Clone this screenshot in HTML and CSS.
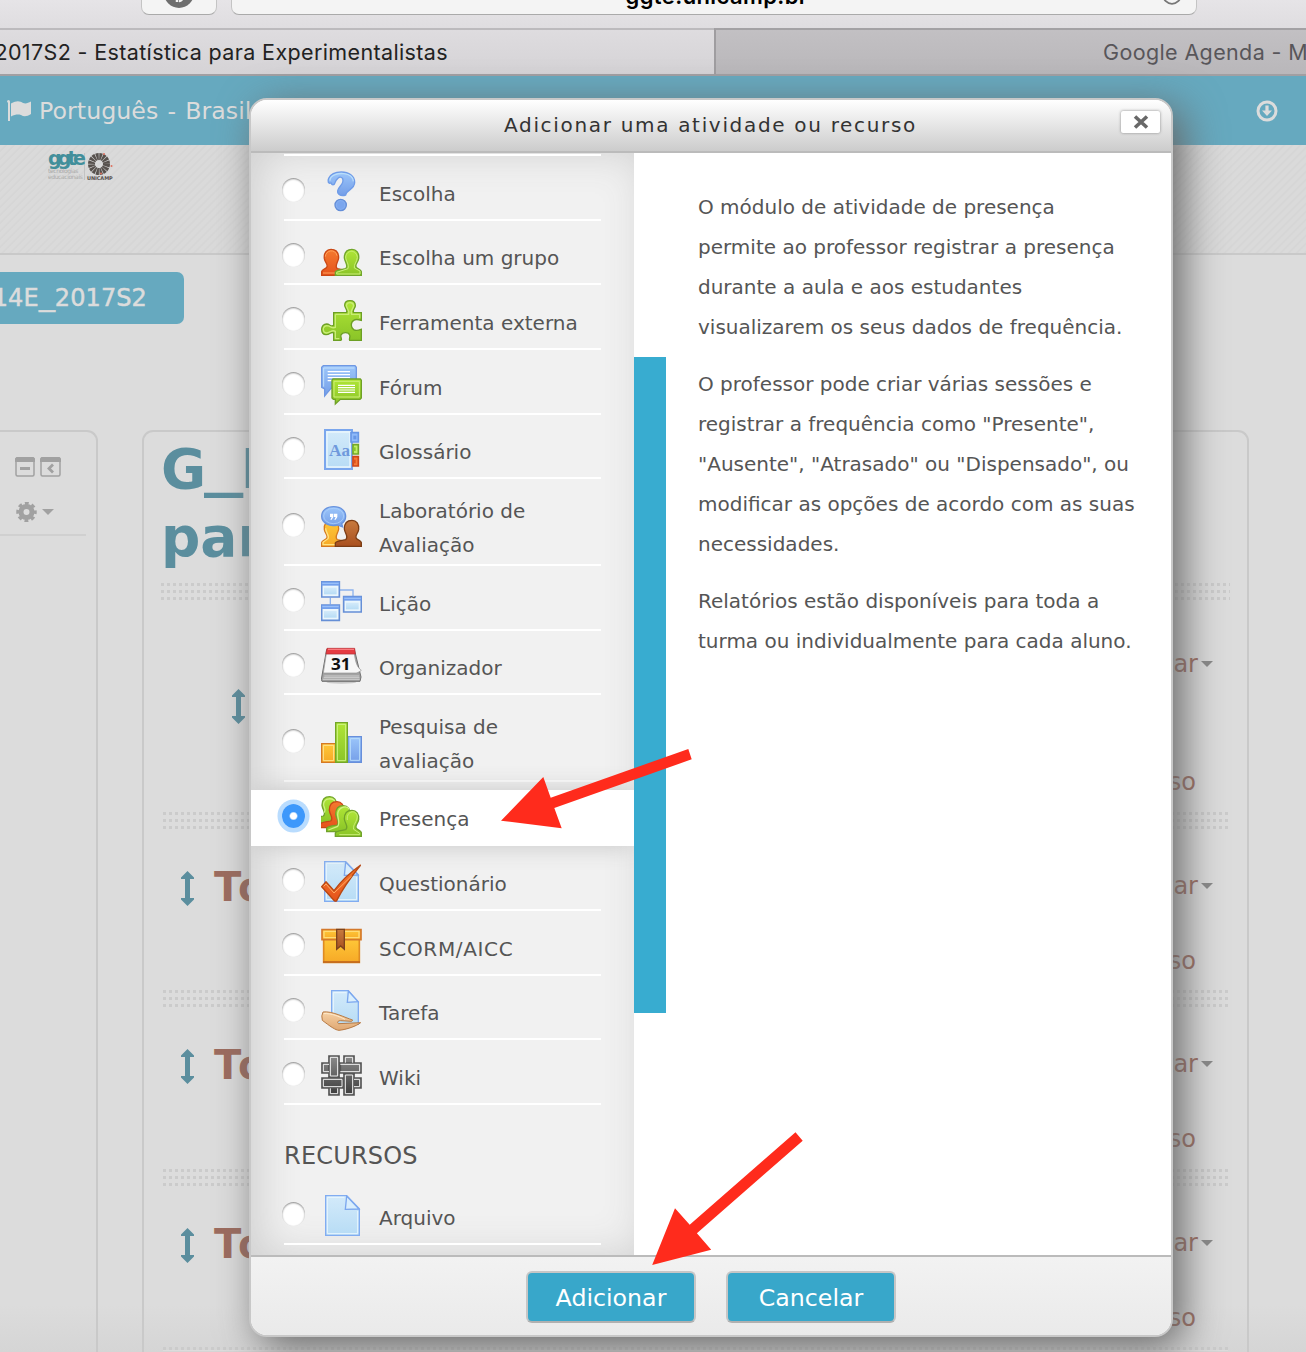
FILE: index.html
```html
<!DOCTYPE html>
<html lang="pt-BR">
<head>
<meta charset="utf-8">
<title>Adicionar uma atividade ou recurso</title>
<link rel="stylesheet" href="styles.css">
</head>
<body>
<svg class="defs" width="0" height="0">
  <defs>
    <linearGradient id="blue" x2="0" y2="1"><stop offset="0" stop-color="#9cc6fa"/><stop offset="1" stop-color="#749ee8"/></linearGradient>
    <linearGradient id="sky" x2="0" y2="1"><stop offset="0" stop-color="#d3eafa"/><stop offset="1" stop-color="#b7dcf5"/></linearGradient>
    <linearGradient id="green" x2="0" y2="1"><stop offset="0" stop-color="#b0e636"/><stop offset="1" stop-color="#8ac428"/></linearGradient>
    <linearGradient id="orange" x2="0" y2="1"><stop offset="0" stop-color="#f47a30"/><stop offset="1" stop-color="#e6531b"/></linearGradient>
    <linearGradient id="gold" x2="0" y2="1"><stop offset="0" stop-color="#ffc838"/><stop offset="1" stop-color="#f6a927"/></linearGradient>
    <linearGradient id="brown" x2="0" y2="1"><stop offset="0" stop-color="#c87a3e"/><stop offset="1" stop-color="#a9501f"/></linearGradient>
    <linearGradient id="dark" x2="0" y2="1"><stop offset="0" stop-color="#8b8b8b"/><stop offset="1" stop-color="#3c3c3c"/></linearGradient>
    <linearGradient id="skin" x2="0" y2="1"><stop offset="0" stop-color="#f6d1a5"/><stop offset="1" stop-color="#dfa772"/></linearGradient>
    <path id="person" d="M30 2C17 2 8 13 10 30C12 41 21 47 18 54C15 62 3 61 2 69V80H80V70C76 61 57 63 49 60C39 53 51 42 53 28C53 11 44 2 30 2Z"/>
    <g id="mover"><path d="M6.500 0L13 6.500V8H9V27H13V28.500L6.500 35L0 28.500V27H4V8H0V6.500Z" fill="#5b8e9e"/></g>
  </defs>
</svg>

<header class="chrome">
  <div class="tool-button"><svg width="30" height="24" viewBox="0 0 30 24"><circle cx="15" cy="9" r="15" fill="#6e6e6e"/><path d="M13 18V12a3 3 0 1 1 2 5M17 8l4 1" fill="none" stroke="#f3f3f3" stroke-width="2.500"/></svg></div>
  <div class="address"><span>ggte.unicamp.br</span><svg class="reload" width="20" height="20" viewBox="0 0 20 20"><circle cx="10" cy="10" r="8.800" fill="none" stroke="#777" stroke-width="1.800"/></svg></div>
</header>
<nav class="tabs">
  <div class="tab active"><span>2017S2 - Estatística para Experimentalistas</span></div>
  <div class="tab"><span>Google Agenda - M</span></div>
</nav>
<div class="navbar">
  <svg width="24" height="21" viewBox="0 0 24 21"><path d="M0 1.500a1.500 1.500 0 0 1 3 0V21H1V3Z M4 3.500C10 0 13 1 16 3c3 1 5 0 8-1.500V14c-4 2.500-7 3-10 1c-3-1-6-.500-10 1.500Z" fill="#dcdcdc"/></svg>
  <span class="language">Português - Brasil</span>
  <svg class="down" width="22" height="22" viewBox="0 0 22 22"><circle cx="11" cy="11" r="9" fill="none" stroke="#dcdcdc" stroke-width="3"/><path d="M9.400 5.500h3.200v5h3.400L11 16l-5-5.500h3.400Z" fill="#dcdcdc"/></svg>
</div>
<div class="banner">
  <div class="logo">
    <div class="ggte"><b>ggte</b><small>tecnologias</small><small>educacionais</small></div>
    <div class="unicamp"><svg width="26" height="22" viewBox="0 0 26 22"><circle cx="12" cy="11" r="7.500" fill="none" stroke="#57514d" stroke-width="7" stroke-dasharray="2.400 .550"/><circle cx="17" cy="1" r="1" fill="#df715f"/><circle cx="24.500" cy="13" r="1" fill="#df715f"/><circle cx="14" cy="20.500" r="1" fill="#df715f"/></svg><b>UNICAMP</b></div>
  </div>
</div>
<div class="crumbs"><span class="crumb">14E<span class="wide">_</span>2017S2</span></div>

<div class="page">
  <aside class="block">
    <div class="block-icons">
      <svg width="20" height="20" viewBox="0 0 20 20"><rect x="1" y="1" width="18" height="18" rx="1.500" fill="none" stroke="#a1a1a1" stroke-width="1.500"/><path d="M0 1.500L1.500 0H18.500L20 1.500V5H0ZM5 10H15V13H5Z" fill="#a1a1a1"/></svg>
      <svg width="21" height="20" viewBox="0 0 21 20"><rect x="1" y="1" width="19" height="18" rx="1.500" fill="none" stroke="#a1a1a1" stroke-width="1.500"/><path d="M0 1.500L1.500 0H19.500L21 1.500V5H0Z" fill="#a1a1a1"/><path d="M13 7.500L9 11.500L13 15.500" fill="none" stroke="#a1a1a1" stroke-width="2.800"/></svg>
    </div>
    <div class="block-menu">
      <svg width="21" height="20" viewBox="-10.500 -10 21 20"><circle r="5.500" fill="none" stroke="#a1a1a1" stroke-width="5"/><circle r="8.500" fill="none" stroke="#a1a1a1" stroke-width="3.500" stroke-dasharray="3.700 2.976" stroke-dashoffset="1.850"/></svg>
      <i class="caret light"></i>
    </div>
  </aside>
  <main class="course">
    <h1>G<span class="wide">_</span>E<br>para</h1>
    <div class="dots first"></div>
    <section class="general"><svg class="mv" width="13" height="35"><use href="#mover"/></svg><span class="edit">Editar<i class="caret"></i></span><span class="add">recurso</span></section>
    <div class="dots"></div>
    <section class="topic"><svg class="mv" width="13" height="35"><use href="#mover"/></svg><h2>Topico</h2><span class="edit">Editar<i class="caret"></i></span><span class="add">recurso</span></section>
    <div class="dots"></div>
    <section class="topic"><svg class="mv" width="13" height="35"><use href="#mover"/></svg><h2>Topico</h2><span class="edit">Editar<i class="caret"></i></span><span class="add">recurso</span></section>
    <div class="dots"></div>
    <section class="topic"><svg class="mv" width="13" height="35"><use href="#mover"/></svg><h2>Topico</h2><span class="edit">Editar<i class="caret"></i></span><span class="add">recurso</span></section>
    <div class="dots last"></div>
  </main>
</div>

<div class="dialog">
  <div class="dialog-head"><span class="title">Adicionar uma atividade ou recurso</span>
    <span class="close"><svg width="16" height="14" viewBox="0 0 16 14"><path d="M2 1.500L14 12.500M14 1.500L2 12.500" stroke="#686868" stroke-width="3.600"/></svg></span></div>
  <div class="dialog-body">
    <div class="list">
      <div class="start"></div>
      <label class="row"><i class="radio"></i><svg class="icon" viewBox="0 0 123 123"><path d="M30 36C14 43 17 3 61 3C84 3 101 15 101 34C101 57 76 55 74 72C58 77 45 68 52 54C58 43 70 37 65 23C56 10 44 28 42 35C39 44 33 43 30 36Z" fill="url(#blue)" stroke="#6f9ce8" stroke-width="4"/><path d="M27 29C26 11 55 6 69 8C85 10 96 19 97 31" fill="none" stroke="#b9defa" stroke-width="4"/><circle cx="59" cy="102" r="17" fill="#84aef0" stroke="#648ed8" stroke-width="4"/><circle cx="59" cy="102" r="11" fill="#7ba6ee"/></svg><span>Escolha</span></label>
      <label class="row short"><i class="radio"></i><svg class="icon" viewBox="0 0 123 123"><use href="#person" transform="translate(0 41)" fill="url(#orange)" stroke="#c94714" stroke-width="4"/><path d="M13 65C14 45 43 40 48 62M6 114H74" fill="none" stroke="#ffa05a" stroke-width="3"/><g transform="translate(123 41) scale(-1 1)"><use href="#person" fill="url(#green)" stroke="#71a52c" stroke-width="4"/><path d="M14 26C16 4 45 0 49 25C48 39 38 46 42 60L76 71V76H6V67L23 58C25 45 15 42 14 26" fill="none" stroke="#c9ee79" stroke-width="3"/></g></svg><span>Escolha um grupo</span></label>
      <label class="row"><i class="radio"></i><svg class="icon" viewBox="0 0 123 123"><path d="M38 38H76C83 30 71 25 71 16C71 6 78 2 87 2C97 2 103 8 103 17C103 25 92 30 98 38H121V61C111 58 105 56 98 61C88 67 89 83 98 89C106 94 113 91 121 88V121H86C83 117 89 111 86 105C83 96 65 95 60 105C57 112 65 117 60 121H38V99C30 93 28 104 15 104C6 104 2 96 2 88C2 79 8 72 17 72C27 72 30 83 38 76Z" fill="url(#green)" stroke="#6c9f24" stroke-width="4"/><path d="M43 43H83C87 31 76 25 76 16C78 5 97 5 98 17C97 26 86 33 92 43H116V54M43 43V82C33 87 28 77 17 77C3 80 4 98 16 99C29 97 33 88 43 94V116H55" fill="none" stroke="#c9ed75" stroke-width="4"/></svg><span>Ferramenta externa</span></label>
      <label class="row"><i class="radio"></i><svg class="icon" viewBox="0 0 123 123"><path d="M7 2H102L106 7V70H30L11 93V72L2 67V7Z" fill="url(#blue)" stroke="#6f98e3" stroke-width="4"/><path d="M8 65V9H100" fill="none" stroke="#c1e0fc" stroke-width="3"/><path d="M20 20H87M20 29H87M20 38H87M20 47H87" stroke="#fff" stroke-width="4"/><path d="M36 42H118L121 46V99L117 103H58L43 117V103H37L33 99V46Z" fill="url(#green)" stroke="#6fa126" stroke-width="4"/><path d="M39 49H115V96H39Z" fill="none" stroke="#ceef79" stroke-width="3"/><path d="M51 61H102M51 68H102M51 75H102M51 82H102" stroke="#fff" stroke-width="3.500"/></svg><span>Fórum</span></label>
      <label class="row short"><i class="radio"></i><svg class="icon" viewBox="0 0 123 123"><path d="M12 3H93V120H12Z" fill="url(#sky)" stroke="#7aa6ed" stroke-width="6"/><path d="M18 9H87V114H18Z" fill="none" stroke="#eaf6fd" stroke-width="4"/><text x="24" y="81" font-family="Liberation Serif, serif" font-weight="bold" font-size="50" textLength="63" lengthAdjust="spacingAndGlyphs" fill="#6f99dc">Aa</text><path d="M90 11H112V39H90Z" fill="#8fbafa" stroke="#6897e5" stroke-width="5"/><path d="M97 20H106V31H97Z" fill="#6897e5"/><path d="M96 47H112V75H96Z" fill="#c0ef65" stroke="#73a728" stroke-width="5"/><path d="M97 55H104V66H97Z" fill="#8ac42c"/><path d="M96 83H112V111H96Z" fill="#f77937" stroke="#ce4518" stroke-width="5"/><path d="M97 92H104V103H97Z" fill="#dc501e"/></svg><span>Glossário</span></label>
      <label class="row tall"><i class="radio"></i><svg class="icon" viewBox="0 0 123 123"><use href="#person" transform="translate(0 41)" fill="url(#gold)" stroke="#d4791f" stroke-width="4"/><path d="M14 67C14 80 26 88 21 98L6 109V116H55" fill="none" stroke="#ffe282" stroke-width="4"/><use href="#person" transform="translate(123 41) scale(-1 1)" fill="url(#brown)" stroke="#7b3c14" stroke-width="4"/><path d="M38 2C62 2 74 16 74 31C74 42 69 48 62 53L65 63L49 57C25 64 2 50 2 31C2 13 17 2 38 2Z" fill="url(#blue)" stroke="#6792de" stroke-width="4"/><ellipse cx="38" cy="30" rx="30" ry="23" fill="none" stroke="#a9cffb" stroke-width="2.500"/><path d="M27 23H37V33L32 41H28L32 33H27ZM39 23H49V33L44 41H40L44 33H39Z" fill="#fff"/></svg><span>Laboratório de<br>Avaliação</span></label>
      <label class="row"><i class="radio"></i><svg class="icon" viewBox="0 0 123 123"><path d="M56 27H96V46M28 50V70" fill="none" stroke="#8db3ed" stroke-width="4"/><g id="win"><path d="M2 2H55V48H2Z" fill="#eaf6fd" stroke="#668fd6" stroke-width="5"/><path d="M2 2H55V14H2Z" fill="#73a0ed"/><path d="M4 7H53" stroke="#a2c7fb" stroke-width="3"/><path d="M9 20H47V40H9Z" fill="url(#sky)"/></g><use href="#win" y="70"/><use href="#win" x="66" y="45"/></svg><span>Lição</span></label>
      <label class="row short"><i class="radio"></i><svg class="icon" viewBox="0 0 123 123"><g transform="translate(0 -4)"><ellipse cx="61" cy="115" rx="45" ry="5" fill="#c8c8c8"/><path d="M17 17H100L120 100L117 113H3L1 107Z" fill="#a3a3a3" stroke="#707070" stroke-width="3"/><path d="M10 97H114M8 102H115M6 107H116" stroke="#e5e5e5" stroke-width="2"/><path d="M16 30H100C103 55 109 72 121 80C112 86 108 89 102 88H7Z" fill="#f7f7f7" stroke="#969696" stroke-width="2"/><path d="M18 14H101L103 31H15Z" fill="#e53c42" stroke="#b72d33" stroke-width="2"/><path d="M21 17H99" stroke="#ff8b8e" stroke-width="3"/><text x="30" y="79" font-family="Noto Sans, sans-serif" font-weight="bold" font-size="46" textLength="59" lengthAdjust="spacingAndGlyphs" fill="#111">31</text></g></svg><span>Organizador</span></label>
      <label class="row tall"><i class="radio"></i><svg class="icon" viewBox="0 0 123 123"><path d="M2 65H44V121H2Z" fill="url(#gold)" stroke="#d57924" stroke-width="4"/><path d="M7 70H38V116H7Z" fill="none" stroke="#ffe495" stroke-width="3"/><path d="M81 44H121V121H81Z" fill="url(#blue)" stroke="#678fdb" stroke-width="4"/><path d="M88 50H116V115H88Z" fill="none" stroke="#bbdefb" stroke-width="3"/><path d="M44 2H79V121H44Z" fill="url(#green)" stroke="#73a628" stroke-width="4"/><path d="M49 7H74V116H49Z" fill="none" stroke="#d0f487" stroke-width="3"/></svg><span>Pesquisa de<br>avaliação</span></label>
      <label class="row selected"><i class="radio checked"></i><svg class="icon" viewBox="0 0 123 123"><g stroke-width="4"><use href="#person" transform="translate(56 0) scale(-1 1)" fill="url(#green)" stroke="#70a22b"/><path d="M10 50C18 38 5 34 8 22C12 4 38 5 42 18" fill="none" stroke="#d0f184"/><use href="#person" transform="translate(78 15) scale(-1 1)" fill="url(#orange)" stroke="#c74717"/><use href="#person" transform="translate(97 27) scale(-1 1)" fill="url(#green)" stroke="#70a22b"/><path d="M22 102L50 91C60 80 46 62 51 49C56 32 78 27 85 40" fill="none" stroke="#d0f184"/><use href="#person" transform="translate(123 41) scale(-1 1)" fill="url(#green)" stroke="#70a22b"/><path d="M79 72C75 46 104 38 109 60C109 77 94 87 98 100L116 112V116H55" fill="none" stroke="#c8ee77" stroke-width="3"/></g></svg><span>Presença</span></label>
      <label class="row after"><i class="radio"></i><svg class="icon" viewBox="0 0 123 123"><g id="doc"><path d="M11 2H74L112 41V121H11Z" fill="url(#sky)" stroke="#81acf1" stroke-width="4"/><path d="M16 7H67M16 7V116H107V48" fill="none" stroke="#e9f6fe" stroke-width="3"/><path d="M74 3L70 43L111 42Z" fill="#d9eefd" stroke="#7ba7ee" stroke-width="4"/></g><path d="M2 77L15 62L39 89C59 62 88 34 119 12C90 48 67 78 47 119Q43 123 38 117Z" fill="url(#orange)" stroke="#b74712" stroke-width="4"/><path d="M8 76L15 69L39 96L92 45" fill="none" stroke="#ffac64" stroke-width="3"/></svg><span>Questionário</span></label>
      <label class="row"><i class="radio"></i><svg class="icon" viewBox="0 0 123 123"><g transform="translate(0 -7)"><path d="M8 45H115V116H8Z" fill="url(#gold)" stroke="#df8b23" stroke-width="5"/><path d="M6 115H117" stroke="#bf641d" stroke-width="5"/><path d="M3 18H120V48H3Z" fill="url(#gold)" stroke="#d4792b" stroke-width="5"/><path d="M9 23H114V42H9Z" fill="none" stroke="#ffdc77" stroke-width="4"/><path d="M47 17H70V77L59 67L47 77Z" fill="url(#brown)" stroke="#7d431c" stroke-width="4"/></g></svg><span class="loose">SCORM/AICC</span></label>
      <label class="row short"><i class="radio"></i><svg class="icon" viewBox="0 0 123 123"><path d="M32 2H82L112 36V103H32Z" fill="url(#sky)" stroke="#81acf1" stroke-width="4"/><path d="M37 8H76M37 8V80" stroke="#eaf6fe" stroke-width="3"/><path d="M82 3L79 37L111 35Z" fill="#dbeffd" stroke="#7ba7ee" stroke-width="4"/><path d="M6 66C32 62 72 83 95 90L92 94L58 92C49 92 48 99 53 101L119 98C107 108 76 119 54 121C44 121 26 108 4 91Q0 77 6 66Z" fill="url(#skin)" stroke="#b77a44" stroke-width="3"/><path d="M8 71C32 69 55 80 72 88" fill="none" stroke="#ffebcc" stroke-width="3"/></svg><span>Tarefa</span></label>
      <label class="row"><i class="radio"></i><svg class="icon" viewBox="0 0 123 123"><g fill="url(#dark)" stroke="#555" stroke-width="5"><path d="M24 68H54V120H24Z M69 3H99V55H69Z M3 24H54V54H3Z M69 69H120V99H69Z"/><path d="M24 3H54V65H24Z M58 24H120V54H58Z M3 69H65V99H3Z M69 58H99V120H69Z"/></g><g fill="none" stroke="#f2f2f2" stroke-width="3"><path d="M28 7H50V63H28ZM73 23V7H95V23M24 28H7V50H24M58 28H116V50H58M7 73H63V95H7ZM28 100V116H50V100M73 60H95V116H73ZM99 73H116V95H99"/></g></svg><span>Wiki</span></label>
      <h3>RECURSOS</h3>
      <label class="row"><i class="radio"></i><svg class="icon" viewBox="-3 0 123 123"><use href="#doc"/></svg><span>Arquivo</span></label>
    </div>
    <div class="strip"></div>
    <div class="description">
      <p>O módulo de atividade de presença<br>permite ao professor registrar a presença<br>durante a aula e aos estudantes<br>visualizarem os seus dados de frequência.</p>
      <p>O professor pode criar várias sessões e<br>registrar a frequência como "Presente",<br>"Ausente", "Atrasado" ou "Dispensado", ou<br>modificar as opções de acordo com as suas<br>necessidades.</p>
      <p>Relatórios estão disponíveis para toda a<br>turma ou individualmente para cada aluno.</p>
    </div>
  </div>
  <div class="dialog-foot"><button>Adicionar</button><button>Cancelar</button></div>
</div>

<svg class="pointers" width="1306" height="1352" viewBox="0 0 1306 1352"><path d="M688.300 749L691.700 759.300L554.300 808L561.700 828.300L501 820.700L543.300 777L550.700 797.700ZM795.500 1132.300L802.700 1140.700L696.900 1233.300L711.200 1249.700L652.200 1265L675 1208.300L689.700 1224.700Z" fill="#ff2b1c"/></svg>
</body>
</html>
```
FILE: styles.css
```css
* { box-sizing: border-box; }
body {
  margin: 0;
  position: relative;
  width: 1306px;
  height: 1352px;
  overflow: hidden;
  background: linear-gradient(#dcdcdc 1305px, #d5d5d5 1352px);
  font-family: "DejaVu Sans", Verdana, sans-serif;
  color: #555;
}
svg { display: block; flex: none; }
.defs { position: absolute; }

/* browser window */
.chrome {
  display: flex;
  gap: 14px;
  height: 28px;
  padding-left: 141px;
  background: linear-gradient(#e6e4e7, #dfdde0);
}
.tool-button, .address {
  display: flex;
  align-items: flex-end;
  height: 15px;
  overflow: hidden;
  background: #f4f4f4;
  border: 1px solid #c4c4c4;
  border-top: 0;
  border-bottom-color: #aaa;
  border-radius: 0 0 8px 8px;
}
.tool-button { width: 76px; justify-content: center; padding-bottom: 6px; }
.address { width: 966px; justify-content: flex-end; }
.address span {
  margin: 0 354px 5px 0;
  color: #000;
  font: 600 22px/26px Inter, sans-serif;
  letter-spacing: .400px;
}
.reload { margin: 0 14px 9px 0; }
.tabs {
  display: flex;
  height: 48px;
  border-bottom: 2px solid #a19fa2;
  font: 400 21.500px/44px Inter, sans-serif;
  letter-spacing: .370px;
  white-space: nowrap;
}
.tab { width: 592px; overflow: hidden; padding-left: 387px; color: #58565a; background: linear-gradient(#c2c0c3, #b9b7ba); border-top: 2px solid #a3a1a4; border-left: 2px solid #9f9da0; }
.tab.active {
  width: 714px;
  display: flex;
  justify-content: flex-end;
  padding: 0 266px 0 0;
  color: #222;
  background: linear-gradient(#dedcdf, #d5d3d6);
  border-top-color: #bcbabd;
  border-left: 0;
}

/* site header */
.navbar { display: flex; align-items: center; height: 69px; padding: 0 28px 0 7px; background: #66a9bf; color: #dcdcdc; }
.language { margin-left: 8px; font-size: 23.700px; letter-spacing: .050px; word-spacing: 1.500px; }
.down { margin-left: auto; }
.banner {
  height: 110px;
  padding: 8px 0 0 48px;
  border-bottom: 2px solid #c9c9c9;
  background: repeating-linear-gradient(135deg, #dadada 0 3px, #d6d6d6 4px 5px, #dadada 5.650px);
}
.logo { display: flex; height: 30px; gap: 2px; }
.ggte { width: 37px; height: 27px; border-right: 1px solid #c3c3c3; color: #aaa; }
.ggte b { display: block; margin-top: -3px; font: 700 19px/16px "DejaVu Sans", sans-serif; letter-spacing: -3.800px; color: #428f9b; height: 18px; }
.ggte small { display: block; font: 6px/6px "DejaVu Sans", sans-serif; letter-spacing: -.400px; white-space: nowrap; }
.unicamp { width: 27px; color: #57514d; }
.unicamp b { display: block; margin-top: 1px; font: 700 5px/5px "DejaVu Sans", sans-serif; letter-spacing: -.100px; }
.crumbs { display: flex; height: 175px; padding-top: 17px; }
.crumb {
  display: flex;
  justify-content: flex-end;
  width: 184px;
  height: 52px;
  padding-right: 37px;
  overflow: hidden;
  border-radius: 0 7px 7px 0;
  background: #66a9bf;
  color: #dcdcdc;
  font-size: 24px;
  line-height: 52px;
  letter-spacing: .100px;
  -webkit-text-stroke: .5px #dcdcdc;
}
.crumb .wide { margin-right: 4px; transform: scaleX(1.330); }

/* course page */
.page { display: flex; gap: 44px; height: 922px; }
.page, .course { overflow: hidden; }
.block { width: 98px; border: 2px solid #c9c9c9; border-left: 0; border-bottom: 0; border-radius: 0 11px 0 0; padding: 25px 10px 0 0; }
.block-icons { display: flex; gap: 5px; padding-left: 15px; }
.block-menu { display: flex; align-items: center; gap: 5px; padding: 25px 0 12px 16px; border-bottom: 2px solid #d0d0d0; }
.caret { display: inline-block; border: 6px solid transparent; border-top-color: #888; border-bottom: 0; }
.caret.light { border-top-color: #a1a1a1; }
.course { width: 1107px; border: 2px solid #c9c9c9; border-bottom: 0; border-radius: 11px 11px 0 0; padding: 3px 17px 0; }
h1 { margin: 0; height: 148px; font-size: 55px; line-height: 68px; color: #5b8e9e; }
.wide { display: inline-block; transform-origin: left; }
h1 .wide { margin: 0 9px 0 -2px; transform: scaleX(1.430) translateY(-3px); }
.dots {
  height: 17px;
  margin: 0 2px;
  background:
    linear-gradient(#dcdcdc, #dcdcdc) 0 3px / 100% 4px no-repeat,
    linear-gradient(#dcdcdc, #dcdcdc) 0 10px / 100% 4px no-repeat,
    repeating-linear-gradient(90deg, #cbcbcb 0 3px, transparent 3px 6px);
}
.dots.first { margin: 0; }
.dots.last { height: 4px; }
.general, .topic { display: grid; grid-template-columns: auto auto 1fr auto; color: #9c6b5e; font-size: 24px; line-height: 30px; }
.general { grid-template-rows: 118px 30px; height: 212px; padding: 49px 17px 0 71px; }
.topic { grid-template-rows: 75px 30px; height: 161.300px; padding: 42px 17px 0 20px; }
.mv { grid-row: 1; }
.general .mv { margin-top: 40px; }
h2 { grid-row: 1; grid-column: 2; margin: -7px 0 0 20px; font-size: 40px; line-height: 46px; letter-spacing: 2px; }
.edit { grid-row: 1; grid-column: 4; justify-self: end; display: flex; align-items: center; gap: 3px; height: 30px; }
.add { grid-row: 2; grid-column: 4; margin-right: 17px; text-align: right; }

/* dialog */
.dialog {
  position: absolute;
  left: 249px;
  top: 98px;
  z-index: 1;
  width: 924px;
  height: 1239px;
  display: flex;
  flex-direction: column;
  overflow: hidden;
  border: 2px solid #c8c8c8;
  border-radius: 18px;
  background: #fff;
  box-shadow: 10px 10px 40px #666;
}
.dialog-head { display: flex; height: 53px; flex: none; padding-left: 253px; background: linear-gradient(#fff, #ccc); border-bottom: 2px solid #bbb; color: #333; }
.title { font-size: 20px; line-height: 50px; letter-spacing: 1.680px; white-space: nowrap; }
.close { display: flex; align-items: center; justify-content: center; width: 39px; height: 22px; margin: 11px 11px 0 auto; background: #fff; border-radius: 2px; box-shadow: 0 0 3px #888; }
.dialog-body { display: flex; height: 1102px; flex: none; }
.list { width: 383px; overflow: hidden; background: #f1f1f1; box-shadow: inset 10px 0 40px #d0d0d0; }
.start { height: 3px; margin: 0 33px; border-bottom: 2px solid #fff; }
.row { position: relative; display: flex; height: 65px; margin: 0 33px; padding-top: 15px; border-bottom: 2px solid #fff; font-size: 20px; line-height: 34px; white-space: nowrap; }
.row .icon { width: 41px; height: 41px; margin-left: 16px; }
.row > span { margin: 6px 0 0 17px; }
.row > .loose { letter-spacing: .650px; }
.row.short { height: 64px; padding-top: 14px; }
.row.short .radio { margin-top: 8px; }
.row.tall { height: 87px; }
.row.tall .icon { margin-top: 12px; }
.row.tall .radio { margin-top: 19px; }
.row.tall > span { margin-top: 0; }
.radio { flex: none; width: 23px; height: 24px; margin: 7px 0 0 -2px; border-radius: 50%; background: #fff; box-shadow: inset 0 1px 2px #888; }
.radio.checked { background: radial-gradient(circle, #fff 3px, #3d98fb 4.500px); box-shadow: 0 0 0 4.500px #b9dcfe; }
.row.selected { z-index: 2; height: 56px; margin: 8px 0 0; padding: 6px 33px 0; border: 0; background: #fff; box-shadow: 0 0 24px #c6c6c6; }
.row.selected .radio { margin-top: 8px; }
h3 { margin: 0 33px; height: 75px; font-size: 24px; font-weight: 400; line-height: 102px; letter-spacing: .200px; }
.strip { width: 32px; height: 656px; margin-top: 204px; background: #38acd0; }
.description { padding: 34px 0 0 32px; font-size: 20px; line-height: 40px; white-space: nowrap; }
.description p { margin: 0 0 17px; }
.dialog-foot { display: flex; justify-content: center; gap: 30px; height: 80px; flex: none; padding-top: 14px; border-top: 2px solid #bbb; background: linear-gradient(#f2f2f2, #eaeaea); }
button { width: 170px; height: 52px; padding: 1px 0 0; border: 2px solid #c6c6c6; border-bottom-color: #b0b0b0; border-radius: 6px; background: #38a7ca; color: #fff; font: 23.700px/46px "DejaVu Sans", sans-serif; }

.pointers { position: absolute; z-index: 2; left: 0; top: 0; }
```
